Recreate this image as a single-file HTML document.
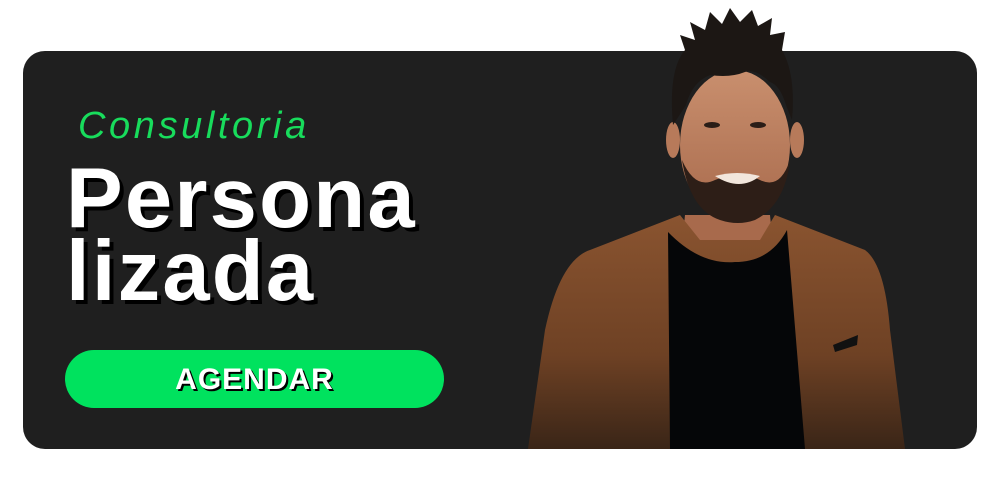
<!DOCTYPE html>
<html><head><meta charset="utf-8"><style>
html,body{margin:0;padding:0;background:#fff;width:1000px;height:500px;overflow:hidden;position:relative;font-family:"Liberation Sans",sans-serif}
.card{position:absolute;left:23px;top:51px;width:954px;height:398px;background:#1f1f1f;border-radius:22px}
.c{position:absolute;left:78px;top:104px;font-size:38px;color:#18dc5c;font-style:italic;letter-spacing:3.6px;line-height:44px}
.t{position:absolute;left:66px;top:162px;font-size:85px;font-weight:bold;color:#fff;line-height:73px;letter-spacing:2.2px;text-shadow:4px 4px 0 #000}
.b{position:absolute;left:65px;top:350px;width:379px;height:58px;border-radius:29px;background:#00e25e;text-align:center;line-height:60px;color:#fff;font-weight:bold;font-size:30px;letter-spacing:1px;text-shadow:2px 2px 0 #000}
svg{position:absolute;left:0;top:0}
</style></head><body>
<div class="card"></div>
<div class="c">Consultoria</div>
<div class="t">Persona<br>lizada</div>
<div class="b">AGENDAR</div>
<svg width="1000" height="500" viewBox="0 0 1000 500">
<defs>
<linearGradient id="j" x1="0" y1="0" x2="0" y2="1"><stop offset="0" stop-color="#8a5430"/><stop offset="0.6" stop-color="#6e4124"/><stop offset="1" stop-color="#3a2517"/></linearGradient>
<linearGradient id="sk" x1="0" y1="0" x2="0" y2="1"><stop offset="0" stop-color="#c98f6e"/><stop offset="1" stop-color="#a86a4c"/></linearGradient>
</defs>
<path d="M685 215 L770 215 L775 265 L680 265 Z" fill="#a86a4c"/>
<path d="M528 449 L545 330 Q560 260 590 250 L680 215 L700 240 L760 240 L775 215 L865 250 Q885 265 890 330 L905 449 Z" fill="url(#j)"/>
<path d="M668 232 Q700 265 735 262 Q770 262 787 230 L805 449 L670 449 Z" fill="#050608"/>
<path d="M833 345 L858 335 L857 345 L835 352 Z" fill="#111"/>
<ellipse cx="735" cy="145" rx="55" ry="75" fill="url(#sk)"/>
<ellipse cx="673" cy="140" rx="7" ry="18" fill="#b77a5a"/>
<ellipse cx="797" cy="140" rx="7" ry="18" fill="#b77a5a"/>
<path d="M682 160 Q690 210 720 220 Q738 226 755 220 Q785 205 790 160 Q780 190 760 180 Q740 170 715 180 Q695 190 682 160 Z" fill="#2d1e17"/>
<path d="M715 176 Q737 170 760 176 Q740 192 715 176 Z" fill="#f2e6dc"/>
<path d="M673 125 Q668 70 685 50 L680 35 L695 40 L690 22 L705 30 L710 12 L722 24 L730 8 L740 22 L752 10 L758 26 L772 18 L770 35 L785 32 L782 50 Q796 75 792 120 L786 105 Q780 85 770 82 Q755 68 745 72 Q730 78 710 75 Q692 82 686 105 Z" fill="#1c1714"/>
<ellipse cx="712" cy="125" rx="8" ry="3" fill="#2a1d17"/>
<ellipse cx="758" cy="125" rx="8" ry="3" fill="#2a1d17"/>
</svg>
</body></html>
